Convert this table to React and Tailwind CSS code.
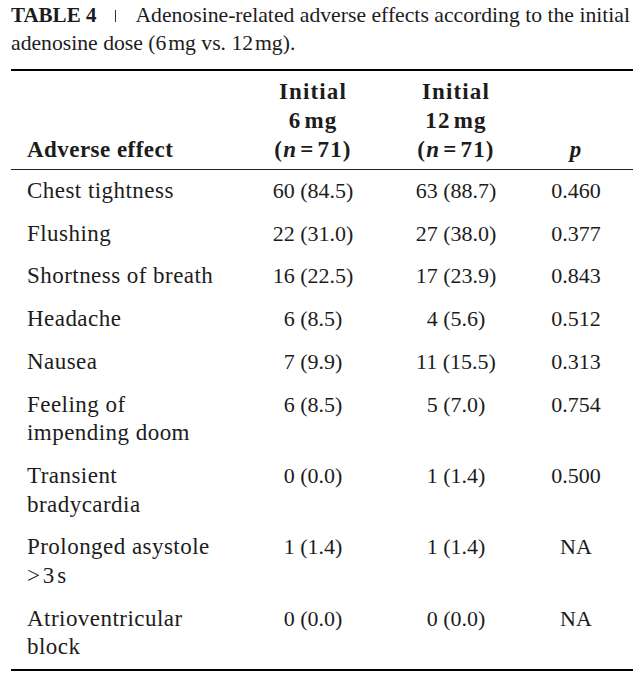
const rows = [
  { label: ['Chest tightness'], a: '60 (84.5)', b: '63 (88.7)', p: '0.460' },
  { label: ['Flushing'], a: '22 (31.0)', b: '27 (38.0)', p: '0.377' },
  { label: ['Shortness of breath'], a: '16 (22.5)', b: '17 (23.9)', p: '0.843' },
  { label: ['Headache'], a: '6 (8.5)', b: '4 (5.6)', p: '0.512' },
  { label: ['Nausea'], a: '7 (9.9)', b: '11 (15.5)', p: '0.313' },
  { label: ['Feeling of', 'impending doom'], a: '6 (8.5)', b: '5 (7.0)', p: '0.754' },
  { label: ['Transient', 'bradycardia'], a: '0 (0.0)', b: '1 (1.4)', p: '0.500' },
  { label: ['Prolonged asystole', '>\u200A3\u200As'], a: '1 (1.4)', b: '1 (1.4)', p: 'NA' },
  { label: ['Atrioventricular', 'block'], a: '0 (0.0)', b: '0 (0.0)', p: 'NA' },
]

const grid = 'grid grid-cols-[230px_144px_142px_98px]'

function HeadCell({ dose }) {
  return (
    <div className="text-center">
      <div>Initial</div>
      <div>{dose}</div>
      <div>
        (<i>n</i>{'\u200A=\u200A'}71)
      </div>
    </div>
  )
}

export default function App() {
  return (
    <div className="px-[11px] pt-px font-['Liberation_Serif','Times_New_Roman',serif] text-[#1c1c1c]">
      <p className="whitespace-nowrap text-[21.7px] leading-[28px]">
        <span className="text-[21px] font-bold">TABLE 4</span>
        <span className="mx-[19px] inline-block h-[12px] w-px bg-[#333]" />
        Adenosine-related adverse effects according to the initial
        <br />
        adenosine dose (6{'\u200A'}mg vs. 12{'\u200A'}mg).
      </p>

      <div className="mt-[12px] border-t-2 border-black">
        <div
          className={`${grid} items-end border-b border-[#222] pt-[6px] pb-[5px] text-[23px] font-bold leading-[29px] tracking-[0.05em]`}
        >
          <div className="pl-[16px] tracking-[0.02em]">Adverse effect</div>
          <HeadCell dose={'6\u200Amg'} />
          <HeadCell dose={'12\u200Amg'} />
          <div className="text-center italic">p</div>
        </div>

        {rows.map((r, i) => (
          <div
            key={i}
            className={`${grid} py-[7px] leading-[28.7px] ${i === rows.length - 1 ? 'border-b-2 border-black' : ''}`}
          >
            <div className="pl-[16px] text-[23px] tracking-[0.02em]">
              {r.label.map((l) => (
                <div key={l}>{l}</div>
              ))}
            </div>
            <div className="text-center text-[22px]">{r.a}</div>
            <div className="text-center text-[22px]">{r.b}</div>
            <div className="text-center text-[22px]">{r.p}</div>
          </div>
        ))}
      </div>
    </div>
  )
}
